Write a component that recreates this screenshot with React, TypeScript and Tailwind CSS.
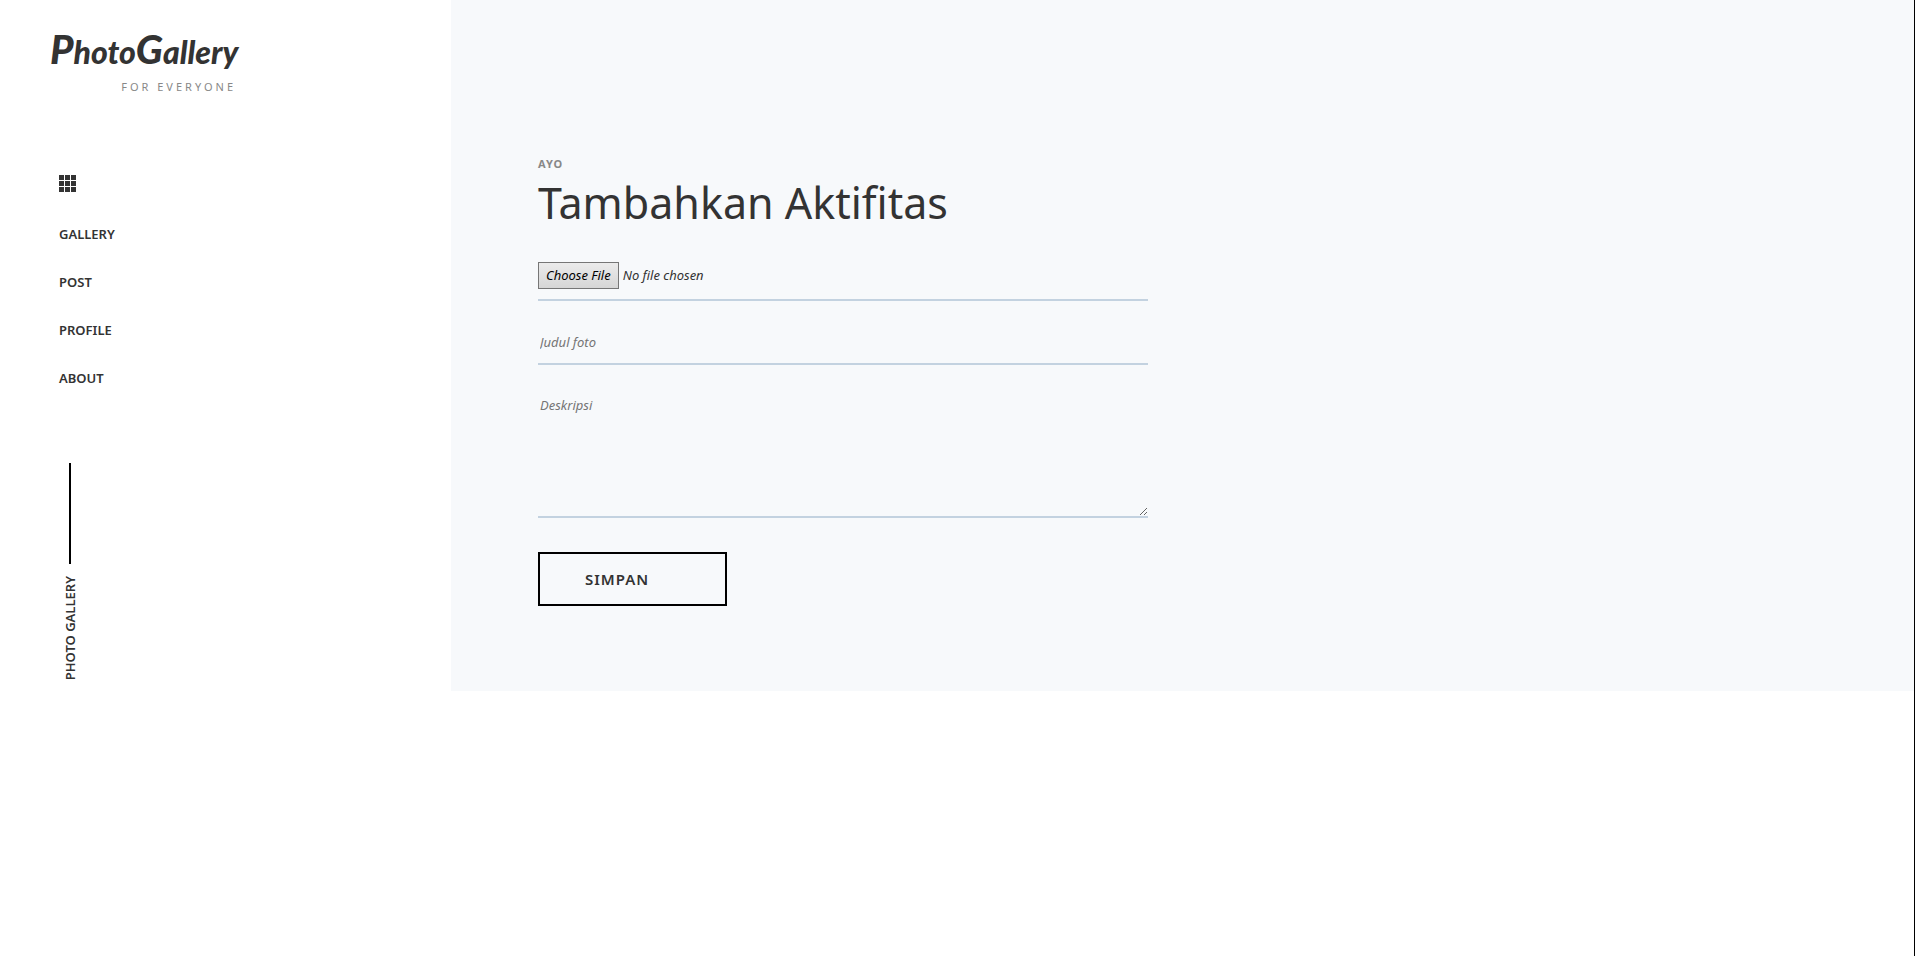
const links = ["Gallery", "Post", "Profile", "About"];

function GridIcon() {
  return (
    <svg width="17" height="17" viewBox="0 0 17 17" fill="#333333" shapeRendering="crispEdges" aria-hidden="true">
      {[0, 6, 12].map((y) => [0, 6, 12].map((x) => <rect key={`${x}-${y}`} x={x} y={y} width="5" height="5" />))}
    </svg>
  );
}

function Sidebar() {
  return (
    <aside className="w-[451px] shrink-0 pt-6">
      <a href="#home" className="ml-[50px] flex w-[186px] flex-col text-[#333333]">
        <span className="h-[52px] whitespace-nowrap font-[Lato,sans-serif] text-[32px] leading-[50px] font-black italic">
          <span className="text-[40px]">P</span>hoto<span className="text-[40px]">G</span>allery
        </span>
        <span className="self-end text-[11px] leading-[22px] tracking-[3px] text-[#888888]">FOR EVERYONE</span>
      </a>
      <div className="ml-[59px] pt-[77px]">
        <button type="button" aria-label="Menu" className="block">
          <GridIcon />
        </button>
        <nav className="mt-[30px] flex flex-col gap-6">
          {links.map((link) => (
            <a key={link} href={`#${link.toLowerCase()}`} className="self-start text-[13px] leading-6 font-semibold uppercase">
              {link}
            </a>
          ))}
        </nav>
        <div className="mt-[73px] flex w-[22px] flex-col items-center gap-3">
          <div className="h-[101px] w-0.5 bg-[#000000]" />
          <p className="rotate-180 text-[13px] leading-5 font-semibold whitespace-nowrap uppercase [writing-mode:vertical-rl]">
            Photo Gallery
          </p>
        </div>
      </div>
    </aside>
  );
}

function ActivityForm() {
  return (
    <form className="flex max-w-[610px] flex-col text-[13px] italic" onSubmit={(e) => e.preventDefault()}>
      <input
        type="file"
        aria-label="Foto"
        className="block h-[51px] w-full border-b-2 border-[#c3d2e0] pt-3 pb-2.5 leading-[25px] file:mr-1 file:h-[27px] file:border file:border-solid file:border-[#767676] file:bg-linear-to-b file:from-[#ebebeb] file:to-[#d6d6d6] file:px-[7px] file:font-normal file:text-black"
      />
      <input
        type="text"
        aria-label="Judul foto"
        placeholder="Judul foto"
        className="mt-5 h-11 w-full border-b-2 border-[#c3d2e0] bg-transparent px-0.5 outline-none placeholder:text-[#757575]"
      />
      <textarea
        aria-label="Deskripsi"
        placeholder="Deskripsi"
        className="mt-5 block h-[133px] w-full resize border-b-2 border-[#c3d2e0] bg-transparent px-0.5 pt-2.5 leading-5 outline-none placeholder:text-[#757575]"
      />
      <button
        type="submit"
        className="mt-[34px] h-[54px] w-[189px] border-2 border-[#000000] pl-[45px] text-left text-[15px] font-semibold tracking-[1px] uppercase not-italic"
      >
        Simpan
      </button>
    </form>
  );
}

export default function App() {
  return (
    <div className="flex min-h-screen items-start border-r border-black bg-white font-['Noto_Sans',sans-serif] text-[#333333]">
      <Sidebar />
      <main className="min-w-0 flex-1 bg-[#f7f9fb] px-[87px] pt-[154px] pb-[85px]">
        <p className="text-[11px] leading-5 font-bold tracking-[1px] text-[#888888] uppercase">Ayo</p>
        <h1 className="mb-[18px] text-[43px] leading-[58px]">Tambahkan Aktifitas</h1>
        <ActivityForm />
      </main>
    </div>
  );
}
